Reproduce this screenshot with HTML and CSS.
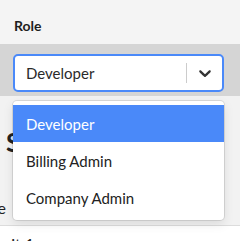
FILE: index.html
```html
<!DOCTYPE html>
<html lang="en">
<head>
    <meta charset="UTF-8">
    <meta name="viewport" content="width=device-width, initial-scale=1.0">
    <title>Role</title>
    <link rel="stylesheet" href="styles.css">
</head>
<body>

    <div class="page">
        <div class="label-row">Role</div>

        <div class="field-row">
            <div class="select">
                <div class="control">
                    <div class="value">Developer</div>
                    <span class="separator"></span>
                    <div class="indicator">
                        <svg width="20" height="20" viewBox="0 0 20 20"><path d="M4.516 7.548c0.436-0.446 1.043-0.481 1.576 0l3.908 3.747 3.908-3.747c0.533-0.481 1.141-0.446 1.574 0 0.436 0.445 0.408 1.197 0 1.615-0.406 0.418-4.695 4.502-4.695 4.502-0.217 0.223-0.502 0.335-0.787 0.335s-0.57-0.112-0.789-0.335c0 0-4.287-4.084-4.695-4.502s-0.436-1.17 0-1.615z"></path></svg>
                    </div>
                </div>

                <div class="menu">
                    <div class="option selected">Developer</div>
                    <div class="option">Billing Admin</div>
                    <div class="option">Company Admin</div>
                </div>
            </div>
        </div>

        <div class="section">
            <h2 class="section-title">Seats</h2>
            <p class="section-text">Usage</p>
        </div>

        <div class="footer">
            <p class="footer-text">Limit 1</p>
        </div>
    </div>

</body>
</html>
```

FILE: styles.css
```css
body {
    margin: 0;
    font-family: Lato, "Noto Sans", sans-serif;
    color: #222;
    background: #ffffff;
    overflow: hidden;
}
.page {
    width: 240px;
    height: 241px;
    overflow: hidden;
}
.label-row {
    height: 44px;
    box-sizing: border-box;
    padding: 17px 14px 0;
    font-size: 14px;
    line-height: 17px;
    font-weight: bold;
    color: #1e1e1e;
    background: #f4f4f4;
}
.field-row {
    background: #d5d5d5;
    padding: 10px 16px 4px 13px;
}
.select {
    position: relative;
}
.control {
    display: flex;
    align-items: center;
    height: 38px;
    box-sizing: border-box;
    border: 2px solid #4a89f9;
    border-radius: 5px;
    background: white;
}
.value {
    flex: 1;
    padding-left: 11px;
    font-size: 15px;
    color: #2a2a2a;
}
.separator {
    width: 1px;
    height: 20px;
    background: #cccccc;
}
.indicator {
    display: flex;
    padding: 0 7px 0 8px;
}
.indicator svg {
    fill: #333;
}
.menu {
    position: absolute;
    top: 47px;
    left: 0;
    right: 0;
    padding: 4px 0;
    background: white;
    border-radius: 4px;
    box-shadow: 0 0 0 1px rgba(0, 0, 0, 0.1), 0 4px 11px rgba(0, 0, 0, 0.1);
    z-index: 2;
}
.option {
    height: 37px;
    display: flex;
    align-items: center;
    padding: 0 13px;
    font-size: 15px;
    color: #222;
}
.option.selected {
    background: #4a89f9;
    color: white;
}
.section {
    height: 129px;
    background: #f2f2f2;
    border-bottom: 1px solid #dcdcdc;
    padding-left: 6px;
}
.section-title {
    margin: 0;
    padding-top: 31px;
    font-size: 26px;
    line-height: 30px;
    font-weight: bold;
}
.section-text {
    margin: 41px 0 0 -43px;
    font-size: 16px;
    line-height: 20px;
}
.footer {
    padding: 8px 0 0 0;
}
.footer-text {
    margin: 0 0 0 -14px;
    font-size: 16px;
    line-height: 20px;
}
```
